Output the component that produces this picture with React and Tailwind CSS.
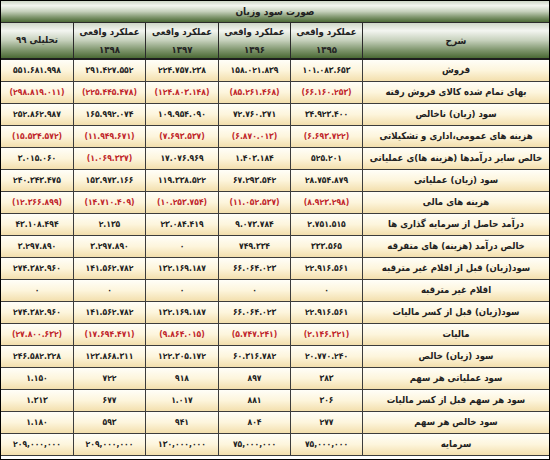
import React from "react";

const rows = [
  ["فروش", ["۱۰۱.۰۸۳.۶۵۳", "۱۵۸.۰۲۱.۸۳۹", "۲۲۴.۷۵۷.۲۳۸", "۳۹۱.۴۲۷.۵۵۲", "۵۵۱.۶۸۱.۹۹۸"]],
  ["بهای تمام شده کالای فروش رفته", ["(۶۶.۱۶۰.۲۵۳)", "(۸۵.۲۶۱.۴۶۸)", "(۱۲۴.۸۰۳.۱۴۸)", "(۲۲۵.۴۴۵.۴۷۸)", "(۲۹۸.۸۱۹.۰۱۱)"]],
  ["سود (زیان) ناخالص", ["۳۴.۹۲۳.۴۰۰", "۷۲.۷۶۰.۳۷۱", "۱۰۹.۹۵۴.۰۹۰", "۱۶۵.۹۹۲.۰۷۴", "۲۵۲.۸۶۲.۹۸۷"]],
  ["هزینه های عمومی،اداری و تشکیلاتی", ["(۶.۶۹۳.۷۲۲)", "(۶.۸۷۰.۰۱۳)", "(۷.۶۹۳.۵۳۷)", "(۱۱.۹۴۹.۶۷۱)", "(۱۵.۵۳۴.۵۷۲)"]],
  ["خالص سایر درآمدها (هزینه ها)ی عملیاتی", ["۵۲۵.۲۰۱", "۱.۴۰۳.۱۸۴", "۱۷.۰۷۶.۹۶۹", "(۱.۰۶۹.۳۳۷)", "۳.۰۱۵.۰۶۰"]],
  ["سود (زیان) عملیاتی", ["۲۸.۷۵۴.۸۷۹", "۶۷.۲۹۳.۵۴۲", "۱۱۹.۳۳۸.۵۲۲", "۱۵۳.۹۷۳.۱۶۶", "۲۴۰.۳۴۳.۴۷۵"]],
  ["هزینه های مالی", ["(۸.۹۲۳.۲۹۸)", "(۱۱.۰۵۲.۵۳۷)", "(۱۰.۲۵۳.۷۵۴)", "(۱۴.۷۱۰.۴۰۹)", "(۱۲.۳۶۶.۸۹۹)"]],
  ["درآمد حاصل از سرمایه گذاری ها", ["۲.۷۵۱.۵۱۵", "۹.۰۷۳.۷۸۴", "۲۳.۰۸۴.۴۱۹", "۲.۱۳۵", "۴۳.۱۰۸.۴۹۴"]],
  ["خالص درآمد (هزینه) های متفرقه", ["۳۳۳.۵۶۵", "۷۴۹.۳۳۴", "۰", "۳.۲۹۷.۸۹۰", "۳.۲۹۷.۸۹۰"]],
  ["سود(زیان) قبل از اقلام غیر مترقبه", ["۲۲.۹۱۶.۵۶۱", "۶۶.۰۶۴.۰۲۳", "۱۳۲.۱۶۹.۱۸۷", "۱۴۱.۵۶۲.۷۸۲", "۲۷۴.۳۸۲.۹۶۰"]],
  ["اقلام غیر مترقبه", ["۰", "۰", "۰", "۰", "۰"]],
  ["سود(زیان) قبل از کسر مالیات", ["۲۲.۹۱۶.۵۶۱", "۶۶.۰۶۴.۰۲۳", "۱۳۲.۱۶۹.۱۸۷", "۱۴۱.۵۶۲.۷۸۲", "۲۷۴.۳۸۲.۹۶۰"]],
  ["مالیات", ["(۲.۱۴۶.۳۲۱)", "(۵.۷۴۷.۲۴۱)", "(۹.۸۶۴.۰۱۵)", "(۱۷.۶۹۴.۴۷۱)", "(۲۷.۸۰۰.۶۳۲)"]],
  ["سود (زیان) خالص", ["۲۰.۷۷۰.۲۴۰", "۶۰.۳۱۶.۷۸۲", "۱۲۲.۳۰۵.۱۷۲", "۱۲۳.۸۶۸.۳۱۱", "۲۴۶.۵۸۲.۳۲۸"]],
  ["سود عملیاتی هر سهم", ["۳۸۳", "۸۹۷", "۹۱۸", "۷۲۲", "۱.۱۵۰"]],
  ["سود هر سهم قبل از کسر مالیات", ["۳۰۶", "۸۸۱", "۱.۰۱۷", "۶۷۷", "۱.۳۱۳"]],
  ["سود خالص هر سهم", ["۲۷۷", "۸۰۴", "۹۴۱", "۵۹۳", "۱.۱۸۰"]],
  ["سرمایه", ["۷۵,۰۰۰,۰۰۰", "۷۵,۰۰۰,۰۰۰", "۱۳۰,۰۰۰,۰۰۰", "۲۰۹,۰۰۰,۰۰۰", "۲۰۹,۰۰۰,۰۰۰"]],
];

const headGrad =
  "bg-[linear-gradient(to_bottom,#cdd6c6_0%,#f3f5f0_22%,#c5d0bb_50%,#7d946b_78%,#4a6934_100%)]";
const cellGrad = "bg-[linear-gradient(to_bottom,#fffef8_0%,#fdf5dc_50%,#f3dfad_100%)]";

export default function App() {
  return (
    <div
      dir="rtl"
      className="w-[550px] h-[460px] bg-white border border-black font-['DejaVu_Sans_Condensed','DejaVu_Sans',sans-serif] font-bold text-[#222] overflow-hidden"
    >
      <div
        className={`h-[22px] flex items-center justify-center text-[10px] border-b border-[#2a2a2a] ${headGrad}`}
      >
        صورت سود وزیان
      </div>
      <div className="grid grid-cols-[187px_72px_72px_73px_72px_72px] h-[37px] border-b-2 border-[#1e1e1e]">
        <div className={`flex items-center justify-center text-[10px] border-l border-[#2a2a2a] ${headGrad}`}>
          شرح
        </div>
        {["۱۳۹۵", "۱۳۹۶", "۱۳۹۷", "۱۳۹۸"].map((y) => (
          <div
            key={y}
            className={`flex flex-col items-center justify-center gap-[6px] text-[9.5px] leading-[12px] border-l border-[#2a2a2a] ${headGrad}`}
          >
            <span>عملکرد واقعی</span>
            <span>{y}</span>
          </div>
        ))}
        <div className={`flex items-center justify-center text-[9.5px] ${headGrad}`}>تحلیلی ۹۹</div>
      </div>
      {rows.map(([label, vals], i) => (
        <div
          key={i}
          className="grid grid-cols-[187px_72px_72px_73px_72px_72px] h-[22px] border-b border-[#3c3c3c]"
        >
          <div
            className={`flex items-center justify-center whitespace-nowrap text-[9.5px] border-l border-[#3c3c3c] ${cellGrad}`}
          >
            {label}
          </div>
          {vals.map((v, j) => (
            <div
              key={j}
              className={`flex items-center justify-center whitespace-nowrap text-[8.5px] ${
                j < 4 ? "border-l border-[#3c3c3c]" : ""
              } ${cellGrad} ${v.startsWith("(") ? "text-[#c0262b]" : "text-[#222]"}`}
            >
              <span dir="ltr">{v}</span>
            </div>
          ))}
        </div>
      ))}
    </div>
  );
}
